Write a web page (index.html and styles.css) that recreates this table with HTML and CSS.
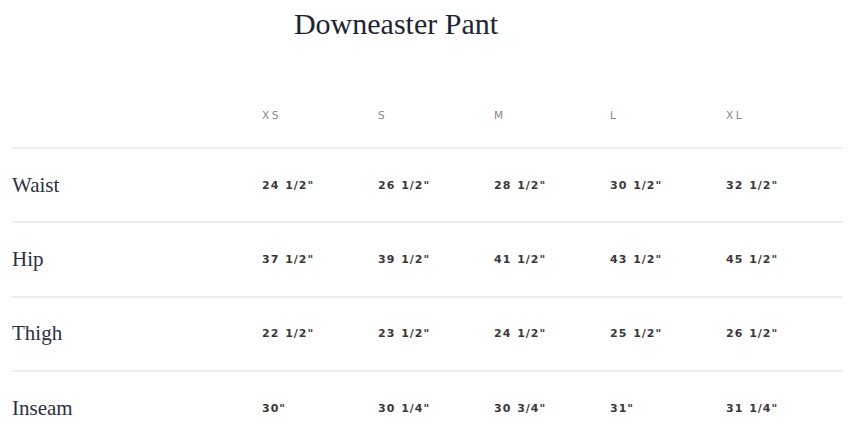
FILE: index.html
```html
<!DOCTYPE html>
<html>
<head>
<meta charset="utf-8">
<link rel="stylesheet" href="styles.css">
</head>
<body>
<h1 class="title">Downeaster Pant</h1>
<div class="chart">
  <div class="row head">
    <div class="label"></div>
    <div class="size">XS</div>
    <div class="size">S</div>
    <div class="size">M</div>
    <div class="size">L</div>
    <div class="size">XL</div>
  </div>
  <div class="row">
    <div class="label">Waist</div>
    <div class="val">24 1/2"</div>
    <div class="val">26 1/2"</div>
    <div class="val">28 1/2"</div>
    <div class="val">30 1/2"</div>
    <div class="val">32 1/2"</div>
  </div>
  <div class="row">
    <div class="label">Hip</div>
    <div class="val">37 1/2"</div>
    <div class="val">39 1/2"</div>
    <div class="val">41 1/2"</div>
    <div class="val">43 1/2"</div>
    <div class="val">45 1/2"</div>
  </div>
  <div class="row">
    <div class="label">Thigh</div>
    <div class="val">22 1/2"</div>
    <div class="val">23 1/2"</div>
    <div class="val">24 1/2"</div>
    <div class="val">25 1/2"</div>
    <div class="val">26 1/2"</div>
  </div>
  <div class="row last">
    <div class="label">Inseam</div>
    <div class="val">30"</div>
    <div class="val">30 1/4"</div>
    <div class="val">30 3/4"</div>
    <div class="val">31"</div>
    <div class="val">31 1/4"</div>
  </div>
</div>
</body>
</html>
```
FILE: styles.css
```css
html, body {
  margin: 0;
  padding: 0;
  background: #ffffff;
}
body {
  width: 850px;
  height: 441px;
  overflow: hidden;
}
.title {
  margin: 0;
  padding: 6px 58px 0 0;
  height: 44px;
  text-align: center;
  font-family: "Liberation Serif", serif;
  font-weight: normal;
  font-size: 30px;
  line-height: 36px;
  color: #1d2535;
}
.chart {
  margin: 0 7px 0 12px;
}
.row {
  display: grid;
  grid-template-columns: 250px repeat(5, 116px);
  align-items: center;
  height: 72.3px;
  border-bottom: 2px solid #eeeeee;
}
.row.head {
  height: 97px;
  align-items: end;
}
.row.head .size {
  padding-bottom: 26px;
}
.row.last {
  border-bottom: none;
}
.label {
  font-family: "Liberation Serif", serif;
  font-size: 21px;
  color: #2a3142;
}
.size {
  font-family: "DejaVu Sans", sans-serif;
  font-size: 10.5px;
  letter-spacing: 2.6px;
  color: #888888;
}
.val {
  font-family: "DejaVu Sans", sans-serif;
  font-weight: bold;
  font-size: 11px;
  letter-spacing: 1px;
  word-spacing: 1px;
  color: #383838;
}
```
